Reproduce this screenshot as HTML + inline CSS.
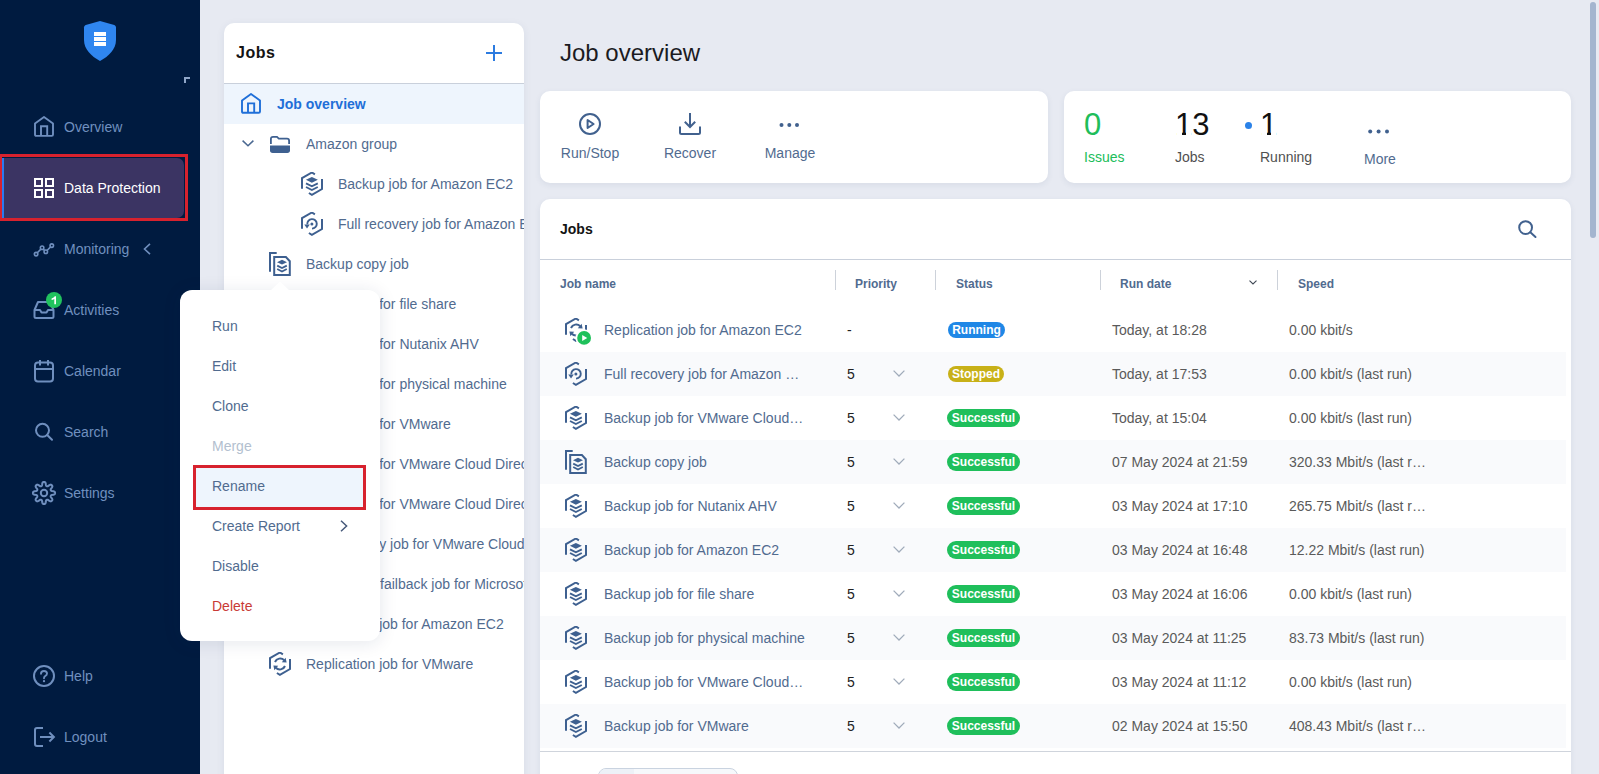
<!DOCTYPE html>
<html><head><meta charset="utf-8">
<style>
*{box-sizing:border-box;margin:0;padding:0}
html,body{width:1599px;height:774px;overflow:hidden}
body{position:relative;background:#e7eaf2;font-family:"Liberation Sans",sans-serif;font-size:14px;color:#516b8f}
.a{position:absolute}
.t{position:absolute;white-space:nowrap;line-height:20px}
svg{position:absolute;overflow:visible}
#side{left:0;top:0;width:200px;height:774px;background:#001b40}
.nav{color:#7090bf;font-size:14px;left:64px}
.card{position:absolute;background:#fff;border-radius:10px}
</style></head><body>

<svg width="0" height="0" style="position:absolute">
<defs>
<symbol id="i-hex" viewBox="0 0 24 24"><path d="M2 16.8 V6.2 L11.9 0.5 L14.9 2.3 M22 7.1 V17 L11.9 22.8 L8.9 21" fill="none" stroke="currentColor" stroke-width="2"/></symbol>
<symbol id="i-layers" viewBox="0 0 24 24"><path d="M5.9 7.8 L11.9 4.9 L17.9 7.8 L11.9 10.7 Z" fill="currentColor"/><path d="M6 11.3 L11.9 14.3 L17.8 11.3 M6 15 L11.9 18 L17.8 15" fill="none" stroke="currentColor" stroke-width="1.9"/></symbol>
<symbol id="i-backup" viewBox="0 0 24 24"><use href="#i-hex"/><use href="#i-layers"/></symbol>
<symbol id="i-recov" viewBox="0 0 24 24"><use href="#i-hex"/><path d="M7.3 12.4 A4.75 4.75 0 1 1 12 16.6" fill="none" stroke="currentColor" stroke-width="1.9"/><path d="M4.3 12.6 H9.8 L7 16.6 Z" fill="currentColor"/><circle cx="11.9" cy="11.9" r="1.5" fill="currentColor"/></symbol>
<symbol id="i-sync" viewBox="0 0 24 24"><path d="M7 10 A5.6 5.6 0 0 1 16.2 8.2" fill="none" stroke="currentColor" stroke-width="2"/><path d="M13.8 10.2 L18.6 10.6 L17.6 5.8 Z" fill="currentColor"/><path d="M17 14 A5.6 5.6 0 0 1 7.8 15.8" fill="none" stroke="currentColor" stroke-width="2"/><path d="M10.2 13.8 L5.4 13.4 L6.4 18.2 Z" fill="currentColor"/></symbol>
<symbol id="i-repl" viewBox="0 0 24 24"><use href="#i-hex"/><use href="#i-sync"/></symbol>
<symbol id="i-copy" viewBox="0 0 24 24"><path d="M2 19.8 V1 H8.7" fill="none" stroke="currentColor" stroke-width="2"/><path d="M6.2 5.1 H17.9 L21.8 9.2 V23 H6.2 Z" fill="none" stroke="currentColor" stroke-width="2"/><path d="M9 10.2 L14 7.8 L19 10.2 L14 12.6 Z" fill="currentColor"/><path d="M9.2 13.6 L14 16.1 L18.8 13.6 M9.2 17 L14 19.5 L18.8 17" fill="none" stroke="currentColor" stroke-width="1.8"/></symbol>
</defs></svg>

<!-- SIDEBAR -->
<div id="side" class="a">
  <!-- logo -->
  <svg style="left:84px;top:21px" width="32" height="40" viewBox="0 0 32 40">
    <path d="M16 0 Q23 1.8 30.3 4 Q32 4.6 32 6.4 V19 C32 28 25 35 16 40 C7 35 0 28 0 19 V6.4 Q0 4.6 1.7 4 Q9 1.8 16 0 Z" fill="#2f86f0"/>
    <rect x="10" y="11" width="12" height="4" fill="#fff"/>
    <rect x="10" y="16" width="12" height="4" fill="#fff"/>
    <rect x="10" y="21" width="12" height="4" fill="#fff"/>
  </svg>
  <svg style="left:184px;top:77px" width="6" height="6" viewBox="0 0 6 6"><path d="M1 6 V1 H6" stroke="#8fa6c8" stroke-width="2" fill="none"/></svg>

  <!-- Overview -->
  <svg style="left:34px;top:116px" width="20" height="21" viewBox="0 0 20 21" fill="none" stroke="#6f8fbe" stroke-width="1.9" stroke-linejoin="round">
    <path d="M1 7.4 L10 1 L19 7.4 V18.6 Q19 19.9 17.7 19.9 H2.3 Q1 19.9 1 18.6 Z"/><path d="M7 19.9 V10.2 H13.2 V19.9" stroke-linejoin="miter"/>
  </svg>
  <div class="t nav" style="top:117px">Overview</div>

  <!-- Data Protection active -->
  <div class="a" style="left:0;top:154px;width:188px;height:67px;border:3px solid #d7222e;border-left-width:2px"></div>
  <div class="a" style="left:2px;top:158px;width:182px;height:60px;background:#3b3463;border-radius:0 7px 7px 0"></div>
  <div class="a" style="left:2px;top:158px;width:2px;height:60px;background:#2b7af0"></div>
  <svg style="left:34px;top:178px" width="20" height="20" viewBox="0 0 20 20" fill="none" stroke="#fff" stroke-width="2">
    <rect x="1" y="1" width="7" height="7"/><rect x="12" y="1" width="7" height="7"/><rect x="1" y="12" width="7" height="7"/><rect x="12" y="12" width="7" height="7"/>
  </svg>
  <div class="t nav" style="top:178px;color:#fff">Data Protection</div>

  <!-- Monitoring -->
  <svg style="left:34px;top:243px" width="20" height="13" viewBox="0 0 20 13" fill="none" stroke="#6f8fbe" stroke-width="1.6">
    <circle cx="2.1" cy="11.1" r="1.75"/><circle cx="8.1" cy="4.8" r="1.75"/><circle cx="11.8" cy="8.8" r="1.75"/><circle cx="17.8" cy="2.6" r="1.75"/>
    <path d="M3.3 9.8 L6.9 6.1 M9.3 6.1 L10.6 7.5 M13 7.5 L16.6 3.9"/>
  </svg>
  <div class="t nav" style="top:239px">Monitoring</div>
  <svg style="left:143px;top:243px" width="8" height="12" viewBox="0 0 8 12" fill="none" stroke="#6f8fbe" stroke-width="1.6"><path d="M7 0.8 L1.5 6 L7 11.2"/></svg>

  <!-- Activities -->
  <svg style="left:33px;top:300px" width="22" height="19" viewBox="0 0 22 19" fill="none" stroke="#6f8fbe" stroke-width="2" stroke-linejoin="round">
    <path d="M1.5 10 L5 2 H17 L20.5 10 V16.5 Q20.5 18 19 18 H3 Q1.5 18 1.5 16.5 Z"/><path d="M1.5 10 H7 L8.5 12.5 H13.5 L15 10 H20.5"/>
  </svg>
  <div class="a" style="left:46px;top:292px;width:16px;height:16px;border-radius:8px;background:#21c25e"></div><svg style="left:46px;top:292px" width="16" height="16" viewBox="0 0 16 16"><path d="M5.6 6.6 Q8 5.6 8.8 4.3 H10 V12.3 H8.3 V6.9 Q7 7.7 5.6 8 Z" fill="#fff"/></svg>
  <div class="t nav" style="top:300px">Activities</div>

  <!-- Calendar -->
  <svg style="left:34px;top:360px" width="20" height="23" viewBox="0 0 20 23" fill="none" stroke="#6f8fbe" stroke-width="2">
    <rect x="1" y="2.5" width="18" height="19" rx="3"/><path d="M1 9 H19 M6 0 V5.5 M14 0 V5.5"/>
  </svg>
  <div class="t nav" style="top:361px">Calendar</div>

  <!-- Search -->
  <svg style="left:34px;top:422px" width="20" height="20" viewBox="0 0 20 20" fill="none" stroke="#6f8fbe" stroke-width="2" stroke-linecap="round">
    <circle cx="8.5" cy="8.3" r="6.5"/><path d="M13.2 13 L18 17.8"/>
  </svg>
  <div class="t nav" style="top:422px">Search</div>

  <!-- Settings -->
  <svg style="left:32px;top:481px" width="24" height="24" viewBox="0 0 24 24" fill="none" stroke="#6f8fbe" stroke-width="2" stroke-linejoin="round">
    <path d="M12.00 0.95 L12.22 0.96 L12.43 0.98 L12.65 1.03 L12.86 1.11 L13.06 1.22 L13.25 1.40 L13.43 1.65 L13.58 2.01 L13.70 2.46 L13.79 2.98 L13.87 3.49 L13.93 3.95 L14.01 4.30 L14.10 4.57 L14.20 4.75 L14.31 4.89 L14.43 5.00 L14.55 5.08 L14.68 5.15 L14.81 5.21 L14.95 5.26 L15.09 5.30 L15.23 5.33 L15.39 5.34 L15.57 5.32 L15.77 5.26 L16.02 5.14 L16.33 4.94 L16.69 4.67 L17.11 4.35 L17.54 4.05 L17.95 3.81 L18.30 3.67 L18.61 3.62 L18.87 3.63 L19.10 3.69 L19.30 3.79 L19.48 3.90 L19.65 4.04 L19.81 4.19 L19.96 4.35 L20.10 4.52 L20.21 4.70 L20.31 4.90 L20.37 5.13 L20.38 5.39 L20.33 5.70 L20.19 6.05 L19.95 6.46 L19.65 6.89 L19.33 7.31 L19.06 7.67 L18.86 7.98 L18.74 8.23 L18.68 8.43 L18.66 8.61 L18.67 8.77 L18.70 8.91 L18.74 9.05 L18.79 9.19 L18.85 9.32 L18.92 9.45 L19.00 9.57 L19.11 9.69 L19.25 9.80 L19.43 9.90 L19.70 9.99 L20.05 10.07 L20.51 10.13 L21.02 10.21 L21.54 10.30 L21.99 10.42 L22.35 10.57 L22.60 10.75 L22.78 10.94 L22.89 11.14 L22.97 11.35 L23.02 11.57 L23.04 11.78 L23.05 12.00 L23.04 12.22 L23.02 12.43 L22.97 12.65 L22.89 12.86 L22.78 13.06 L22.60 13.25 L22.35 13.43 L21.99 13.58 L21.54 13.70 L21.02 13.79 L20.51 13.87 L20.05 13.93 L19.70 14.01 L19.43 14.10 L19.25 14.20 L19.11 14.31 L19.00 14.43 L18.92 14.55 L18.85 14.68 L18.79 14.81 L18.74 14.95 L18.70 15.09 L18.67 15.23 L18.66 15.39 L18.68 15.57 L18.74 15.77 L18.86 16.02 L19.06 16.33 L19.33 16.69 L19.65 17.11 L19.95 17.54 L20.19 17.95 L20.33 18.30 L20.38 18.61 L20.37 18.87 L20.31 19.10 L20.21 19.30 L20.10 19.48 L19.96 19.65 L19.81 19.81 L19.65 19.96 L19.48 20.10 L19.30 20.21 L19.10 20.31 L18.87 20.37 L18.61 20.38 L18.30 20.33 L17.95 20.19 L17.54 19.95 L17.11 19.65 L16.69 19.33 L16.33 19.06 L16.02 18.86 L15.77 18.74 L15.57 18.68 L15.39 18.66 L15.23 18.67 L15.09 18.70 L14.95 18.74 L14.81 18.79 L14.68 18.85 L14.55 18.92 L14.43 19.00 L14.31 19.11 L14.20 19.25 L14.10 19.43 L14.01 19.70 L13.93 20.05 L13.87 20.51 L13.79 21.02 L13.70 21.54 L13.58 21.99 L13.43 22.35 L13.25 22.60 L13.06 22.78 L12.86 22.89 L12.65 22.97 L12.43 23.02 L12.22 23.04 L12.00 23.05 L11.78 23.04 L11.57 23.02 L11.35 22.97 L11.14 22.89 L10.94 22.78 L10.75 22.60 L10.57 22.35 L10.42 21.99 L10.30 21.54 L10.21 21.02 L10.13 20.51 L10.07 20.05 L9.99 19.70 L9.90 19.43 L9.80 19.25 L9.69 19.11 L9.57 19.00 L9.45 18.92 L9.32 18.85 L9.19 18.79 L9.05 18.74 L8.91 18.70 L8.77 18.67 L8.61 18.66 L8.43 18.68 L8.23 18.74 L7.98 18.86 L7.67 19.06 L7.31 19.33 L6.89 19.65 L6.46 19.95 L6.05 20.19 L5.70 20.33 L5.39 20.38 L5.13 20.37 L4.90 20.31 L4.70 20.21 L4.52 20.10 L4.35 19.96 L4.19 19.81 L4.04 19.65 L3.90 19.48 L3.79 19.30 L3.69 19.10 L3.63 18.87 L3.62 18.61 L3.67 18.30 L3.81 17.95 L4.05 17.54 L4.35 17.11 L4.67 16.69 L4.94 16.33 L5.14 16.02 L5.26 15.77 L5.32 15.57 L5.34 15.39 L5.33 15.23 L5.30 15.09 L5.26 14.95 L5.21 14.81 L5.15 14.68 L5.08 14.55 L5.00 14.43 L4.89 14.31 L4.75 14.20 L4.57 14.10 L4.30 14.01 L3.95 13.93 L3.49 13.87 L2.98 13.79 L2.46 13.70 L2.01 13.58 L1.65 13.43 L1.40 13.25 L1.22 13.06 L1.11 12.86 L1.03 12.65 L0.98 12.43 L0.96 12.22 L0.95 12.00 L0.96 11.78 L0.98 11.57 L1.03 11.35 L1.11 11.14 L1.22 10.94 L1.40 10.75 L1.65 10.57 L2.01 10.42 L2.46 10.30 L2.98 10.21 L3.49 10.13 L3.95 10.07 L4.30 9.99 L4.57 9.90 L4.75 9.80 L4.89 9.69 L5.00 9.57 L5.08 9.45 L5.15 9.32 L5.21 9.19 L5.26 9.05 L5.30 8.91 L5.33 8.77 L5.34 8.61 L5.32 8.43 L5.26 8.23 L5.14 7.98 L4.94 7.67 L4.67 7.31 L4.35 6.89 L4.05 6.46 L3.81 6.05 L3.67 5.70 L3.62 5.39 L3.63 5.13 L3.69 4.90 L3.79 4.70 L3.90 4.52 L4.04 4.35 L4.19 4.19 L4.35 4.04 L4.52 3.90 L4.70 3.79 L4.90 3.69 L5.13 3.63 L5.39 3.62 L5.70 3.67 L6.05 3.81 L6.46 4.05 L6.89 4.35 L7.31 4.67 L7.67 4.94 L7.98 5.14 L8.23 5.26 L8.43 5.32 L8.61 5.34 L8.77 5.33 L8.91 5.30 L9.05 5.26 L9.19 5.21 L9.32 5.15 L9.45 5.08 L9.57 5.00 L9.69 4.89 L9.80 4.75 L9.90 4.57 L9.99 4.30 L10.07 3.95 L10.13 3.49 L10.21 2.98 L10.30 2.46 L10.42 2.01 L10.57 1.65 L10.75 1.40 L10.94 1.22 L11.14 1.11 L11.35 1.03 L11.57 0.98 L11.78 0.96Z"/>
    <circle cx="12" cy="12" r="3.2"/>
  </svg>
  <div class="t nav" style="top:483px">Settings</div>

  <!-- Help -->
  <svg style="left:33px;top:665px" width="22" height="22" viewBox="0 0 22 22" fill="none" stroke="#6f8fbe" stroke-width="2">
    <circle cx="11" cy="11" r="10"/><path d="M8 8.8 Q8 6 11 6 Q14 6 14 8.6 Q14 10.2 12.1 11.1 Q11 11.6 11 13.3" stroke-linecap="round" stroke-width="1.9"/><circle cx="11" cy="16.2" r="1.15" fill="#6f8fbe" stroke="none"/>
  </svg>
  <div class="t nav" style="top:666px">Help</div>

  <!-- Logout -->
  <svg style="left:34px;top:727px" width="21" height="20" viewBox="0 0 21 20" fill="none" stroke="#6f8fbe" stroke-width="2">
    <path d="M9 1 H3 Q1 1 1 3 V17 Q1 19 3 19 H9"/><path d="M6 10 H20 M15.4 5.5 L19.9 10 L15.4 14.5"/>
  </svg>
  <div class="t nav" style="top:727px">Logout</div>
</div>

<!-- TREE PANEL -->
<div class="card" id="tree" style="left:224px;top:23px;width:300px;height:800px;overflow:hidden;border-radius:10px 10px 0 0;box-shadow:0 2px 8px rgba(40,60,100,0.08)">
  <div class="t" style="left:12px;top:18px;font-size:16px;line-height:24px;font-weight:bold;color:#141414;letter-spacing:0.5px">Jobs</div>
  <svg style="left:262px;top:22px" width="16" height="16" viewBox="0 0 16 16"><path d="M8 0 V16 M0 8 H16" stroke="#2c7be0" stroke-width="2"/></svg>
  <div class="a" style="left:0;top:60px;width:300px;height:1px;background:#c9d0db"></div>
  <div class="a" style="left:0;top:61px;width:300px;height:40px;background:#eef5fd"></div>
  <svg style="left:17px;top:70px" width="20" height="21" viewBox="0 0 20 21" fill="none" stroke="#1f6fd8" stroke-width="1.9" stroke-linejoin="round">
    <path d="M1 7.5 L10 0.9 L19 7.5 V18.5 Q19 19.8 17.7 19.8 H2.3 Q1 19.8 1 18.5 Z"/><path d="M7 19.8 V10.4 H13.2 V19.8" stroke-linejoin="miter"/>
  </svg>
  <div class="t" style="left:53px;top:71px;font-weight:bold;color:#1f6fd8">Job overview</div>
  <svg style="left:18px;top:117px" width="12" height="7" viewBox="0 0 12 7"><path d="M0.6 0.6 L6 5.8 L11.4 0.6" fill="none" stroke="#4a6891" stroke-width="1.5"/></svg>
  <svg style="left:46px;top:113px" width="20" height="17" viewBox="0 0 20 17"><path d="M0.9 8 V3 Q0.9 0.9 3 0.9 H7 L8.8 2.6 H17 Q19.1 2.6 19.1 4.7 V8" fill="none" stroke="#3e6090" stroke-width="1.8"/><path d="M0 9.6 H20 V14.2 Q20 16.9 17.3 16.9 H2.7 Q0 16.9 0 14.2 Z" fill="#3e6090"/></svg>
  <div class="t" style="left:82px;top:111px">Amazon group</div>
  <svg style="left:76px;top:149px;color:#3e6090" width="24" height="24" viewBox="0 0 24 24"><use href="#i-backup"/></svg>
  <div class="t" style="left:114px;top:151px">Backup job for Amazon EC2</div>
  <svg style="left:76px;top:189px;color:#3e6090" width="24" height="24" viewBox="0 0 24 24"><use href="#i-recov"/></svg>
  <div class="t" style="left:114px;top:191px">Full recovery job for Amazon EC2</div>
  <svg style="left:44px;top:229px;color:#3e6090" width="24" height="24" viewBox="0 0 24 24"><use href="#i-copy"/></svg>
  <div class="t" style="left:82px;top:231px">Backup copy job</div>
  <svg style="left:44px;top:269px;color:#3e6090" width="24" height="24" viewBox="0 0 24 24"><use href="#i-backup"/></svg>
  <div class="t" style="left:82px;top:271px">Backup job for file share</div>
  <svg style="left:44px;top:309px;color:#3e6090" width="24" height="24" viewBox="0 0 24 24"><use href="#i-backup"/></svg>
  <div class="t" style="left:82px;top:311px">Backup job for Nutanix AHV</div>
  <svg style="left:44px;top:349px;color:#3e6090" width="24" height="24" viewBox="0 0 24 24"><use href="#i-backup"/></svg>
  <div class="t" style="left:82px;top:351px">Backup job for physical machine</div>
  <svg style="left:44px;top:389px;color:#3e6090" width="24" height="24" viewBox="0 0 24 24"><use href="#i-backup"/></svg>
  <div class="t" style="left:82px;top:391px">Backup job for VMware</div>
  <svg style="left:44px;top:429px;color:#3e6090" width="24" height="24" viewBox="0 0 24 24"><use href="#i-backup"/></svg>
  <div class="t" style="left:82px;top:431px">Backup job for VMware Cloud Director</div>
  <svg style="left:44px;top:469px;color:#3e6090" width="24" height="24" viewBox="0 0 24 24"><use href="#i-backup"/></svg>
  <div class="t" style="left:82px;top:471px">Backup job for VMware Cloud Director 2</div>
  <svg style="left:44px;top:509px;color:#3e6090" width="24" height="24" viewBox="0 0 24 24"><use href="#i-recov"/></svg>
  <div class="t" style="left:82px;top:511px">Full recovery job for VMware Cloud Director</div>
  <svg style="left:44px;top:549px;color:#3e6090" width="24" height="24" viewBox="0 0 24 24"><use href="#i-repl"/></svg>
  <div class="t" style="left:82px;top:551px"><span style="display:inline-block;width:74px"></span>failback job for Microsoft Hyper-V</div>
  <svg style="left:44px;top:589px;color:#3e6090" width="24" height="24" viewBox="0 0 24 24"><use href="#i-repl"/></svg>
  <div class="t" style="left:82px;top:591px">Replication job for Amazon EC2</div>
  <svg style="left:44px;top:629px;color:#3e6090" width="24" height="24" viewBox="0 0 24 24"><use href="#i-repl"/></svg>
  <div class="t" style="left:82px;top:631px">Replication job for VMware</div>
</div>

<!-- MAIN -->
<div class="t" style="left:560px;top:38px;font-size:24px;line-height:30px;color:#1b1b1f">Job overview</div>
<div class="card" style="left:540px;top:91px;width:508px;height:92px;box-shadow:0 2px 6px rgba(40,60,100,0.08)">
  <svg style="left:39px;top:22px" width="22" height="22" viewBox="0 0 22 22" fill="none" stroke="#41618e" stroke-width="2"><circle cx="11" cy="11" r="10"/><path d="M8.6 7 V15 L14.6 11 Z" stroke-linejoin="round"/></svg>
  <div class="t" style="left:0;width:100px;text-align:center;top:52px">Run/Stop</div>
  <svg style="left:139px;top:22px" width="22" height="22" viewBox="0 0 22 22" fill="none" stroke="#41618e" stroke-width="2"><path d="M11 0 V14 M5.8 8.8 L11 14 L16.2 8.8" /><path d="M1 13.5 V19.5 Q1 21 2.5 21 H19.5 Q21 21 21 19.5 V13.5"/></svg>
  <div class="t" style="left:100px;width:100px;text-align:center;top:52px">Recover</div>
  <svg style="left:238px;top:31px" width="24" height="6" viewBox="0 0 24 6" fill="#41618e"><circle cx="3.5" cy="3" r="2"/><circle cx="11.3" cy="3" r="2"/><circle cx="19" cy="3" r="2"/></svg>
  <div class="t" style="left:200px;width:100px;text-align:center;top:52px">Manage</div>
</div>
<div class="card" style="left:1064px;top:91px;width:507px;height:92px;box-shadow:0 2px 6px rgba(40,60,100,0.08)">
  <div class="t" style="left:20px;top:16px;font-size:31px;line-height:36px;color:#20bd5a">0</div>
  <div class="t" style="left:20px;top:56px;color:#20bd5a">Issues</div>
  <div class="t" style="left:111px;top:16px;font-size:31px;line-height:36px;color:#111">13</div>
  <div class="a" style="left:113px;top:41px;width:5px;height:3px;background:#fff"></div>
  <div class="a" style="left:122px;top:41px;width:5px;height:3px;background:#fff"></div>
  <div class="t" style="left:111px;top:56px;color:#505050">Jobs</div>
  <div class="a" style="left:181px;top:31px;width:7px;height:7px;border-radius:50%;background:#2b82e8"></div>
  <div class="t" style="left:196px;top:16px;font-size:31px;line-height:36px;color:#111">1</div>
  <div class="t" style="left:196px;top:56px;color:#505050">Running</div>
  <svg style="left:304px;top:38px" width="22" height="5" viewBox="0 0 22 5" fill="#41618e"><circle cx="2.2" cy="2.5" r="2"/><circle cx="10.6" cy="2.5" r="2"/><circle cx="19" cy="2.5" r="2"/></svg>
  <div class="t" style="left:300px;top:58px">More</div>
  <div class="a" style="left:198px;top:41px;width:5px;height:3px;background:#fff"></div>
  <div class="a" style="left:207px;top:41px;width:5px;height:3px;background:#fff"></div>
</div>
<div class="card" id="jobs" style="left:540px;top:199px;width:1031px;height:700px;box-shadow:0 2px 6px rgba(40,60,100,0.08);overflow:hidden;border-radius:10px 10px 0 0">
  <div class="t" style="left:20px;top:20px;font-weight:bold;color:#141414">Jobs</div>
  <svg style="left:978px;top:21px" width="19" height="18" viewBox="0 0 19 18" fill="none" stroke="#41618e" stroke-width="2" stroke-linecap="round"><circle cx="7.6" cy="7.6" r="6.4"/><path d="M12.3 12.3 L17.5 17"/></svg>
  <div class="a" style="left:0;top:60px;width:1031px;height:1px;background:#c9d0db"></div>
  <div class="t" style="left:20px;top:75px;font-size:12px;font-weight:bold">Job name</div>
  <div class="a" style="left:295px;top:71px;width:1px;height:20px;background:#cdd2da"></div>
  <div class="t" style="left:315px;top:75px;font-size:12px;font-weight:bold">Priority</div>
  <div class="a" style="left:395px;top:71px;width:1px;height:20px;background:#cdd2da"></div>
  <div class="t" style="left:416px;top:75px;font-size:12px;font-weight:bold">Status</div>
  <div class="a" style="left:560px;top:71px;width:1px;height:20px;background:#cdd2da"></div>
  <div class="t" style="left:580px;top:75px;font-size:12px;font-weight:bold">Run date</div>
  <svg style="left:709px;top:80.5px" width="8" height="5" viewBox="0 0 8 5"><path d="M0.5 0.6 L4 3.9 L7.5 0.6" fill="none" stroke="#3f4754" stroke-width="1.1"/></svg>
  <div class="a" style="left:737px;top:71px;width:1px;height:20px;background:#cdd2da"></div>
  <div class="t" style="left:758px;top:75px;font-size:12px;font-weight:bold">Speed</div>
  <svg style="left:24px;top:119px;color:#3e6090" width="24" height="24" viewBox="0 0 24 24"><use href="#i-repl"/></svg>
  <svg style="left:24px;top:119px" width="32" height="32" viewBox="0 0 32 32"><circle cx="20.1" cy="19.9" r="8.6" fill="#fff"/><circle cx="20.1" cy="19.9" r="6.9" fill="#1fc15b"/><path d="M18.2 17 L23.2 19.9 L18.2 22.9 Z" fill="#fff"/></svg>
  <div class="t" style="left:64px;top:121px">Replication job for Amazon EC2</div>
  <div class="t" style="left:307px;top:121px;color:#222">-</div>
  <div class="a" style="left:408px;top:123px;width:57px;height:16px;border-radius:8px;background:#1f87e6;color:#fff;font-size:12px;font-weight:bold;line-height:16px;text-align:center">Running</div>
  <div class="t" style="left:572px;top:121px;color:#5a5a5a">Today, at 18:28</div>
  <div class="t" style="left:749px;top:121px;color:#5a5a5a">0.00 kbit/s</div>
  <div class="a" style="left:0;top:153px;width:1026px;height:44px;background:#f9fafc"></div>
  <svg style="left:24px;top:163px;color:#3e6090" width="24" height="24" viewBox="0 0 24 24"><use href="#i-recov"/></svg>
  <div class="t" style="left:64px;top:165px">Full recovery job for Amazon …</div>
  <div class="t" style="left:307px;top:165px;color:#222">5</div>
  <svg style="left:353px;top:171px" width="12" height="7" viewBox="0 0 12 7"><path d="M0.6 0.6 L6 6 L11.4 0.6" fill="none" stroke="#a0abba" stroke-width="1.25"/></svg>
  <div class="a" style="left:408px;top:167px;width:56px;height:16px;border-radius:8px;background:#c8b118;color:#fff;font-size:12px;font-weight:bold;line-height:16px;text-align:center">Stopped</div>
  <div class="t" style="left:572px;top:165px;color:#5a5a5a">Today, at 17:53</div>
  <div class="t" style="left:749px;top:165px;color:#5a5a5a">0.00 kbit/s (last run)</div>
  <svg style="left:24px;top:207px;color:#3e6090" width="24" height="24" viewBox="0 0 24 24"><use href="#i-backup"/></svg>
  <div class="t" style="left:64px;top:209px">Backup job for VMware Cloud…</div>
  <div class="t" style="left:307px;top:209px;color:#222">5</div>
  <svg style="left:353px;top:215px" width="12" height="7" viewBox="0 0 12 7"><path d="M0.6 0.6 L6 6 L11.4 0.6" fill="none" stroke="#a0abba" stroke-width="1.25"/></svg>
  <div class="a" style="left:407px;top:210px;width:73px;height:18px;border-radius:9px;background:#1fbf5b;color:#fff;font-size:12px;font-weight:bold;line-height:18px;text-align:center">Successful</div>
  <div class="t" style="left:572px;top:209px;color:#5a5a5a">Today, at 15:04</div>
  <div class="t" style="left:749px;top:209px;color:#5a5a5a">0.00 kbit/s (last run)</div>
  <div class="a" style="left:0;top:241px;width:1026px;height:44px;background:#f9fafc"></div>
  <svg style="left:24px;top:251px;color:#3e6090" width="24" height="24" viewBox="0 0 24 24"><use href="#i-copy"/></svg>
  <div class="t" style="left:64px;top:253px">Backup copy job</div>
  <div class="t" style="left:307px;top:253px;color:#222">5</div>
  <svg style="left:353px;top:259px" width="12" height="7" viewBox="0 0 12 7"><path d="M0.6 0.6 L6 6 L11.4 0.6" fill="none" stroke="#a0abba" stroke-width="1.25"/></svg>
  <div class="a" style="left:407px;top:254px;width:73px;height:18px;border-radius:9px;background:#1fbf5b;color:#fff;font-size:12px;font-weight:bold;line-height:18px;text-align:center">Successful</div>
  <div class="t" style="left:572px;top:253px;color:#5a5a5a">07 May 2024 at 21:59</div>
  <div class="t" style="left:749px;top:253px;color:#5a5a5a">320.33 Mbit/s (last r…</div>
  <svg style="left:24px;top:295px;color:#3e6090" width="24" height="24" viewBox="0 0 24 24"><use href="#i-backup"/></svg>
  <div class="t" style="left:64px;top:297px">Backup job for Nutanix AHV</div>
  <div class="t" style="left:307px;top:297px;color:#222">5</div>
  <svg style="left:353px;top:303px" width="12" height="7" viewBox="0 0 12 7"><path d="M0.6 0.6 L6 6 L11.4 0.6" fill="none" stroke="#a0abba" stroke-width="1.25"/></svg>
  <div class="a" style="left:407px;top:298px;width:73px;height:18px;border-radius:9px;background:#1fbf5b;color:#fff;font-size:12px;font-weight:bold;line-height:18px;text-align:center">Successful</div>
  <div class="t" style="left:572px;top:297px;color:#5a5a5a">03 May 2024 at 17:10</div>
  <div class="t" style="left:749px;top:297px;color:#5a5a5a">265.75 Mbit/s (last r…</div>
  <div class="a" style="left:0;top:329px;width:1026px;height:44px;background:#f9fafc"></div>
  <svg style="left:24px;top:339px;color:#3e6090" width="24" height="24" viewBox="0 0 24 24"><use href="#i-backup"/></svg>
  <div class="t" style="left:64px;top:341px">Backup job for Amazon EC2</div>
  <div class="t" style="left:307px;top:341px;color:#222">5</div>
  <svg style="left:353px;top:347px" width="12" height="7" viewBox="0 0 12 7"><path d="M0.6 0.6 L6 6 L11.4 0.6" fill="none" stroke="#a0abba" stroke-width="1.25"/></svg>
  <div class="a" style="left:407px;top:342px;width:73px;height:18px;border-radius:9px;background:#1fbf5b;color:#fff;font-size:12px;font-weight:bold;line-height:18px;text-align:center">Successful</div>
  <div class="t" style="left:572px;top:341px;color:#5a5a5a">03 May 2024 at 16:48</div>
  <div class="t" style="left:749px;top:341px;color:#5a5a5a">12.22 Mbit/s (last run)</div>
  <svg style="left:24px;top:383px;color:#3e6090" width="24" height="24" viewBox="0 0 24 24"><use href="#i-backup"/></svg>
  <div class="t" style="left:64px;top:385px">Backup job for file share</div>
  <div class="t" style="left:307px;top:385px;color:#222">5</div>
  <svg style="left:353px;top:391px" width="12" height="7" viewBox="0 0 12 7"><path d="M0.6 0.6 L6 6 L11.4 0.6" fill="none" stroke="#a0abba" stroke-width="1.25"/></svg>
  <div class="a" style="left:407px;top:386px;width:73px;height:18px;border-radius:9px;background:#1fbf5b;color:#fff;font-size:12px;font-weight:bold;line-height:18px;text-align:center">Successful</div>
  <div class="t" style="left:572px;top:385px;color:#5a5a5a">03 May 2024 at 16:06</div>
  <div class="t" style="left:749px;top:385px;color:#5a5a5a">0.00 kbit/s (last run)</div>
  <div class="a" style="left:0;top:417px;width:1026px;height:44px;background:#f9fafc"></div>
  <svg style="left:24px;top:427px;color:#3e6090" width="24" height="24" viewBox="0 0 24 24"><use href="#i-backup"/></svg>
  <div class="t" style="left:64px;top:429px">Backup job for physical machine</div>
  <div class="t" style="left:307px;top:429px;color:#222">5</div>
  <svg style="left:353px;top:435px" width="12" height="7" viewBox="0 0 12 7"><path d="M0.6 0.6 L6 6 L11.4 0.6" fill="none" stroke="#a0abba" stroke-width="1.25"/></svg>
  <div class="a" style="left:407px;top:430px;width:73px;height:18px;border-radius:9px;background:#1fbf5b;color:#fff;font-size:12px;font-weight:bold;line-height:18px;text-align:center">Successful</div>
  <div class="t" style="left:572px;top:429px;color:#5a5a5a">03 May 2024 at 11:25</div>
  <div class="t" style="left:749px;top:429px;color:#5a5a5a">83.73 Mbit/s (last run)</div>
  <svg style="left:24px;top:471px;color:#3e6090" width="24" height="24" viewBox="0 0 24 24"><use href="#i-backup"/></svg>
  <div class="t" style="left:64px;top:473px">Backup job for VMware Cloud…</div>
  <div class="t" style="left:307px;top:473px;color:#222">5</div>
  <svg style="left:353px;top:479px" width="12" height="7" viewBox="0 0 12 7"><path d="M0.6 0.6 L6 6 L11.4 0.6" fill="none" stroke="#a0abba" stroke-width="1.25"/></svg>
  <div class="a" style="left:407px;top:474px;width:73px;height:18px;border-radius:9px;background:#1fbf5b;color:#fff;font-size:12px;font-weight:bold;line-height:18px;text-align:center">Successful</div>
  <div class="t" style="left:572px;top:473px;color:#5a5a5a">03 May 2024 at 11:12</div>
  <div class="t" style="left:749px;top:473px;color:#5a5a5a">0.00 kbit/s (last run)</div>
  <div class="a" style="left:0;top:505px;width:1026px;height:44px;background:#f9fafc"></div>
  <svg style="left:24px;top:515px;color:#3e6090" width="24" height="24" viewBox="0 0 24 24"><use href="#i-backup"/></svg>
  <div class="t" style="left:64px;top:517px">Backup job for VMware</div>
  <div class="t" style="left:307px;top:517px;color:#222">5</div>
  <svg style="left:353px;top:523px" width="12" height="7" viewBox="0 0 12 7"><path d="M0.6 0.6 L6 6 L11.4 0.6" fill="none" stroke="#a0abba" stroke-width="1.25"/></svg>
  <div class="a" style="left:407px;top:518px;width:73px;height:18px;border-radius:9px;background:#1fbf5b;color:#fff;font-size:12px;font-weight:bold;line-height:18px;text-align:center">Successful</div>
  <div class="t" style="left:572px;top:517px;color:#5a5a5a">02 May 2024 at 15:50</div>
  <div class="t" style="left:749px;top:517px;color:#5a5a5a">408.43 Mbit/s (last r…</div>
  <div class="a" style="left:0;top:552px;width:1031px;height:1px;background:#cfd4dc"></div>
  <div class="a" style="left:58px;top:569px;width:140px;height:40px;border:1px solid #c9d3e0;border-radius:8px;background:#f6f8fb;overflow:hidden"><div class="a" style="left:0;top:0;width:35px;height:40px;background:#edf1f7"></div></div>
</div>

<!-- CONTEXT MENU -->
<div class="a" style="left:180px;top:290px;width:200px;height:351px;background:#fff;border-radius:12px;box-shadow:0 2px 18px rgba(20,40,80,0.11)"></div>
<svg style="left:268px;top:280px" width="24" height="12" viewBox="0 0 24 12"><path d="M2 11 L12 1.5 L22 11 Z" fill="#fff"/></svg>
<div class="t" style="left:212px;top:316px">Run</div>
<div class="t" style="left:212px;top:356px">Edit</div>
<div class="t" style="left:212px;top:396px">Clone</div>
<div class="t" style="left:212px;top:436px;color:#b3bfcf">Merge</div>
<div class="a" style="left:193px;top:465px;width:173px;height:45px;border:3px solid #d7222e;background:#eef5fd"></div>
<div class="t" style="left:212px;top:476px">Rename</div>
<div class="t" style="left:212px;top:516px">Create Report</div>
<svg style="left:340px;top:520px" width="8" height="12" viewBox="0 0 8 12"><path d="M1 0.8 L6.6 6 L1 11.2" fill="none" stroke="#46597a" stroke-width="1.5"/></svg>
<div class="t" style="left:212px;top:556px">Disable</div>
<div class="t" style="left:212px;top:596px;color:#c93a36">Delete</div>

<!-- scrollbar -->
<div class="a" style="left:1590px;top:2px;width:6px;height:236px;border-radius:3px;background:#a3b5cf"></div>

</body></html>
